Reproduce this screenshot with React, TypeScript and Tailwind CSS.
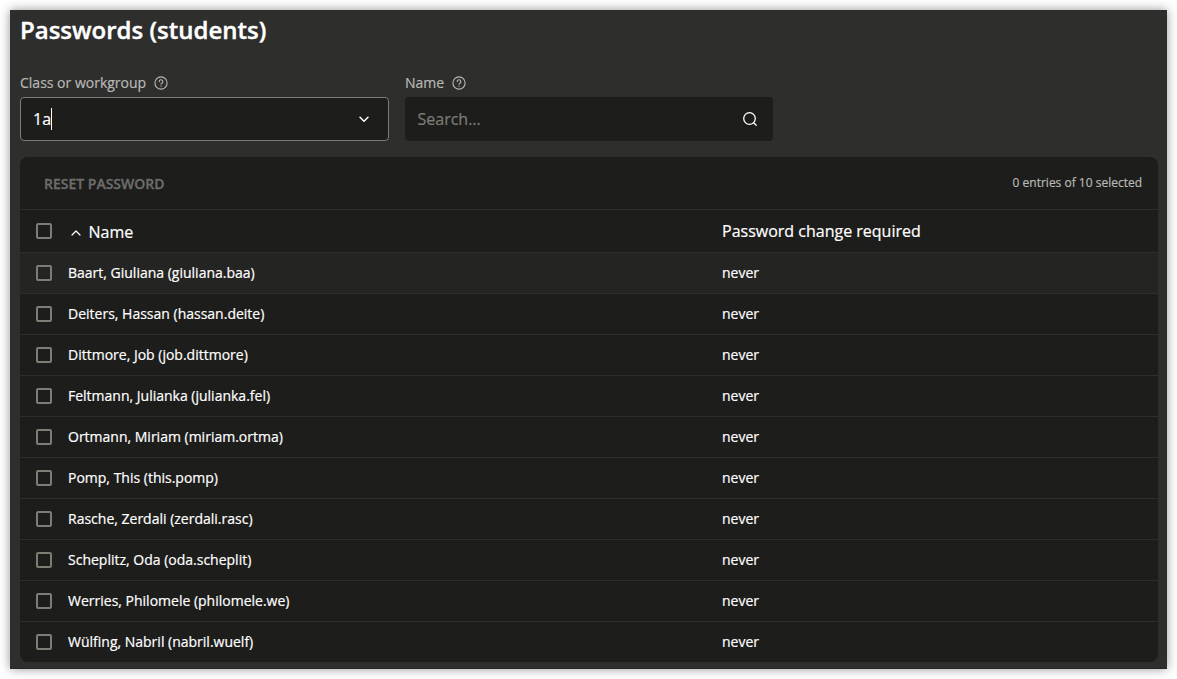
import React from "react";

const students = [
  "Baart, Giuliana (giuliana.baa)",
  "Deiters, Hassan (hassan.deite)",
  "Dittmore, Job (job.dittmore)",
  "Feltmann, Julianka (julianka.fel)",
  "Ortmann, Miriam (miriam.ortma)",
  "Pomp, This (this.pomp)",
  "Rasche, Zerdali (zerdali.rasc)",
  "Scheplitz, Oda (oda.scheplit)",
  "Werries, Philomele (philomele.we)",
  "Wülfing, Nabril (nabril.wuelf)",
];

function HelpIcon() {
  return (
    <svg className="size-[14px]" viewBox="0 0 14 14" fill="none" stroke="currentColor" strokeWidth="1.1" strokeLinecap="round">
      <circle cx="7" cy="7" r="6.1" />
      <path d="M5.2 5.6a1.8 1.8 0 1 1 2.7 1.55C7.3 7.5 7 7.75 7 8.3" />
      <path d="M7 10.1v.1" />
    </svg>
  );
}

function Checkbox() {
  return <span role="checkbox" aria-checked="false" className="size-4 shrink-0 rounded-[2px] border-2 border-[#7d7d74]" />;
}

function FieldLabel({ children }: { children: React.ReactNode }) {
  return (
    <div className="flex h-5 items-center gap-2 text-sm text-[#b8b8b5]">
      <span>{children}</span>
      <HelpIcon />
    </div>
  );
}

export default function App() {
  return (
    <div className="h-[679px] w-[1177px] overflow-hidden bg-white p-[10px] font-['Open_Sans',sans-serif] [-webkit-text-stroke:0.2px_currentColor]">
      <main className="h-[659px] w-[1157px] border-b border-[#29262a] bg-[#2e2e2c] pl-[10px] text-white shadow-[0_0_10px_rgba(0,0,0,0.42)]">
        <h1 className="h-[63px] pt-1 text-2xl leading-8 font-semibold [-webkit-text-stroke:0.4px_currentColor]">Passwords (students)</h1>

        <div className="flex gap-4">
          <div className="w-[369px]">
            <FieldLabel>Class or workgroup</FieldLabel>
            <div className="mt-1 flex h-11 items-center rounded-[4px] border border-[#7d7d74] bg-[#1d1d1b] pr-[17px] pl-3">
              <span className="text-base">1a</span>
              <span className="h-[22px] w-px bg-white" />
              <svg className="ml-auto size-[14px]" viewBox="0 0 14 14" fill="none" stroke="currentColor" strokeWidth="1.5" strokeLinecap="round" strokeLinejoin="round">
                <path d="M3 5.2l4 4 4-4" />
              </svg>
            </div>
          </div>
          <div className="w-[368px]">
            <FieldLabel>Name</FieldLabel>
            <div className="mt-1 flex h-11 items-center justify-between rounded-[4px] bg-[#1d1d1b] pr-[15px] pl-[12.5px]">
              <span className="text-base text-[#7d7d74]">Search...</span>
              <svg className="size-4" viewBox="0 0 16 16" fill="none" stroke="currentColor" strokeWidth="1.3" strokeLinecap="round">
                <circle cx="7.5" cy="7.5" r="5.8" />
                <path d="M11.7 11.7l2.5 2.5" />
              </svg>
            </div>
          </div>
        </div>

        <section className="mt-4 w-[1138px] overflow-hidden rounded-lg bg-[#1d1d1b]">
          <div className="flex h-[53px] items-center justify-between border-b border-[#2e2e2c] pr-4 pl-6">
            <span className="pt-0.5 text-sm font-semibold text-[#6d6d6b] [-webkit-text-stroke:0.3px_currentColor]">RESET PASSWORD</span>
            <span className="text-xs text-[#b8b8b5]">0 entries of 10 selected</span>
          </div>
          <div className="flex h-[43px] items-center border-b border-[#2e2e2c] pl-4 text-base">
            <Checkbox />
            <div className="flex w-[670px] items-center pt-0.5 pl-[18px]">
              <svg className="mt-0.5 size-3" viewBox="0 0 12 12" fill="none" stroke="currentColor" strokeWidth="1.2" strokeLinecap="round" strokeLinejoin="round">
                <path d="M2 8l4-4 4 4" />
              </svg>
              <span className="ml-[6.5px]">Name</span>
            </div>
            <span>Password change required</span>
          </div>
          {students.map((student) => (
            <div
              key={student}
              className="flex h-[41px] items-center border-b border-[#2e2e2c] pl-4 text-sm last:h-10 last:border-b-0 nth-[3]:bg-[#242422]"
            >
              <Checkbox />
              <span className="w-[670px] pl-4">{student}</span>
              <span>never</span>
            </div>
          ))}
        </section>
      </main>
    </div>
  );
}
